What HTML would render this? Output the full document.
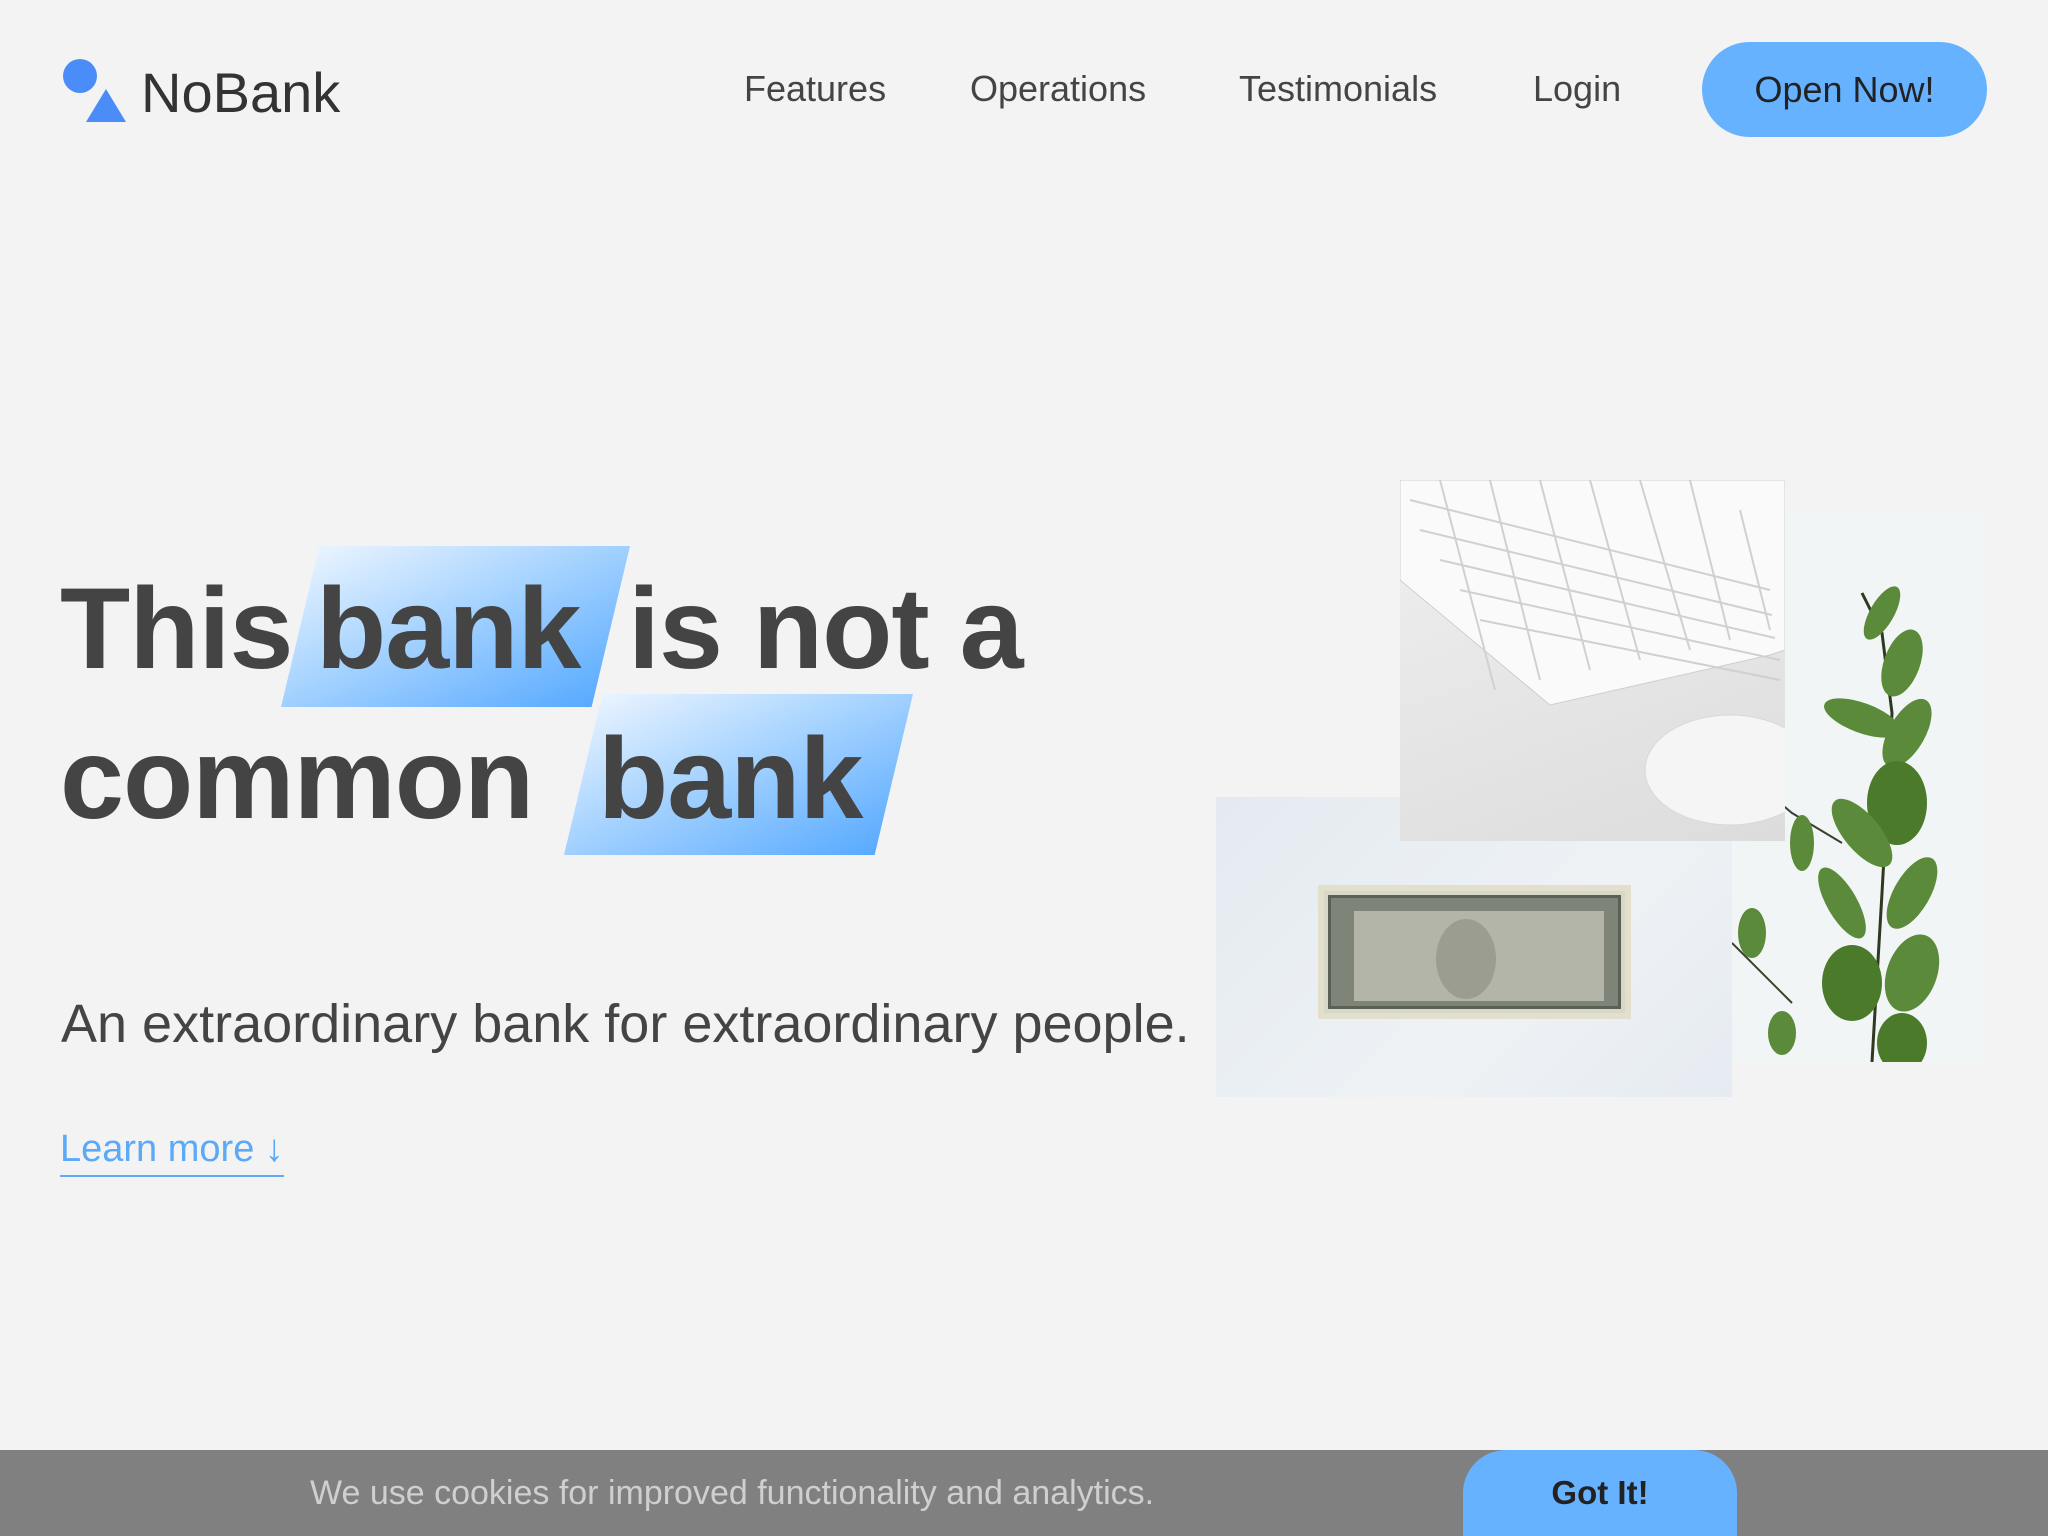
<!DOCTYPE html>
<html><head><meta charset="utf-8"><style>
*{margin:0;padding:0;box-sizing:border-box}
html,body{width:2048px;height:1536px;overflow:hidden}
body{background:#f3f3f3;position:relative;font-family:"Liberation Sans",sans-serif;color:#444}
.abs{position:absolute;white-space:nowrap}
.nav{font-size:36px;color:#444;top:68px}
.h{font-size:115px;font-weight:bold;color:#444;letter-spacing:-1px}
.hl{position:absolute;background:linear-gradient(to bottom right,#f3f8ff 0%,#a8d4ff 45%,#4fa5ff 100%)}
</style></head><body>
<div class="abs" style="left:63px;top:59px;width:34px;height:34px;border-radius:50%;background:#4a8df8"></div>
<div class="abs" style="left:86px;top:89px;width:0;height:0;border-left:20px solid transparent;border-right:20px solid transparent;border-bottom:33px solid #4a8df8"></div>
<div class="abs" style="left:141px;top:60px;font-size:56px;color:#333">NoBank</div>
<div class="abs nav" style="left:744px">Features</div>
<div class="abs nav" style="left:970px">Operations</div>
<div class="abs nav" style="left:1239px">Testimonials</div>
<div class="abs nav" style="left:1533px">Login</div>
<div class="abs" style="left:1702px;top:42px;width:285px;height:95px;border-radius:48px;background:#66b2ff;color:#222;font-size:36px;text-align:center;line-height:95px">Open Now!</div>

<div class="hl" style="left:281px;top:546px;width:349px;height:161px;clip-path:polygon(11% 0,100% 0,89% 100%,0 100%)"></div>
<div class="hl" style="left:564px;top:694px;width:349px;height:161px;clip-path:polygon(11% 0,100% 0,89% 100%,0 100%)"></div>
<div class="abs h" style="left:60px;top:563px">This</div>
<div class="abs h" style="left:316px;top:563px">bank</div>
<div class="abs h" style="left:628px;top:563px">is not a</div>
<div class="abs h" style="left:60px;top:713px">common</div>
<div class="abs h" style="left:598px;top:713px">bank</div>

<div class="abs" style="left:61px;top:993px;font-size:54px;color:#444">An extraordinary bank for extraordinary people.</div>
<div class="abs" style="left:60px;top:1128px;font-size:38px;color:#5aaaf8;border-bottom:2px solid #5aaaf8;padding-bottom:4px">Learn more ↓</div>

<!-- plant -->
<div class="abs" style="left:1732px;top:513px;width:254px;height:549px;background:#f2f5f6;overflow:hidden">
<svg width="254" height="549" viewBox="0 0 254 549">
<path d="M140 549 L150 380 L160 200 L150 120 L130 80" stroke="#2d3a20" stroke-width="3" fill="none"/>
<path d="M0 250 L60 300 L110 330" stroke="#3a4030" stroke-width="2" fill="none"/>
<path d="M0 430 L60 490" stroke="#3a4030" stroke-width="2" fill="none"/>
<g fill="#5a8a3a">
<ellipse cx="150" cy="100" rx="12" ry="30" transform="rotate(30 150 100)"/>
<ellipse cx="170" cy="150" rx="18" ry="35" transform="rotate(20 170 150)"/>
<ellipse cx="130" cy="205" rx="15" ry="40" transform="rotate(-70 130 205)"/>
<ellipse cx="175" cy="220" rx="18" ry="38" transform="rotate(30 175 220)"/>
<ellipse cx="165" cy="290" rx="30" ry="42" fill="#4a7a2a"/>
<ellipse cx="130" cy="320" rx="18" ry="42" transform="rotate(-40 130 320)"/>
<ellipse cx="110" cy="390" rx="15" ry="40" transform="rotate(-30 110 390)"/>
<ellipse cx="180" cy="380" rx="18" ry="40" transform="rotate(30 180 380)"/>
<ellipse cx="180" cy="460" rx="25" ry="40" transform="rotate(20 180 460)"/>
<ellipse cx="120" cy="470" rx="30" ry="38" fill="#4a7a2a"/>
<ellipse cx="70" cy="330" rx="12" ry="28"/>
<ellipse cx="20" cy="420" rx="14" ry="25"/>
<ellipse cx="50" cy="520" rx="14" ry="22"/>
<ellipse cx="170" cy="530" rx="25" ry="30" fill="#4a7a2a"/>
</g></svg></div>
<!-- dollar -->
<div class="abs" style="left:1216px;top:797px;width:516px;height:300px;background:linear-gradient(135deg,#e4eaf0,#eef2f5 60%,#e6ebf1)"></div>
<div class="abs" style="left:1318px;top:885px;width:313px;height:134px;background:#d8d8c8;border:6px solid #e2dfcc;overflow:hidden">
<div style="position:absolute;inset:4px;background:#7e8478;border:3px solid #5a6055"></div>
<div style="position:absolute;left:112px;top:28px;width:60px;height:80px;border-radius:50%;background:#4a4f46"></div>
<div style="position:absolute;left:30px;top:20px;width:250px;height:90px;background:rgba(220,222,205,.55)"></div>
</div>
<!-- keyboard -->
<div class="abs" style="left:1400px;top:480px;width:385px;height:361px;background:linear-gradient(160deg,#f0f0f0,#e6e6e6 50%,#dcdcdc);overflow:hidden">
<svg width="385" height="361" viewBox="0 0 385 361">
<path d="M0 100 L0 0 L385 0 L385 170 L370 175 L150 225 Z" fill="#fafafa" stroke="#cfcfcf"/>
<g stroke="#d0d0d0" stroke-width="2">
<path d="M10 20 L370 110 M20 50 L372 135 M40 80 L375 158 M60 110 L380 180 M80 140 L380 200"/>
<path d="M40 0 L95 210 M90 0 L140 200 M140 0 L190 190 M190 0 L240 180 M240 0 L290 170 M290 0 L330 160 M340 30 L370 150"/>
</g>
<ellipse cx="330" cy="290" rx="85" ry="55" fill="#f5f5f5" stroke="#d8d8d8"/>
</svg></div>

<div class="abs" style="left:0;top:1450px;width:2048px;height:86px;background:#808080"></div>
<div class="abs" style="left:310px;top:1474px;font-size:34px;color:#cfcfcf">We use cookies for improved functionality and analytics.</div>
<div class="abs" style="left:1463px;top:1450px;width:274px;height:86px;border-radius:43px 43px 0 0;background:#66b2ff;color:#222;font-size:33px;font-weight:bold;text-align:center;line-height:86px">Got It!</div>
</body></html>
